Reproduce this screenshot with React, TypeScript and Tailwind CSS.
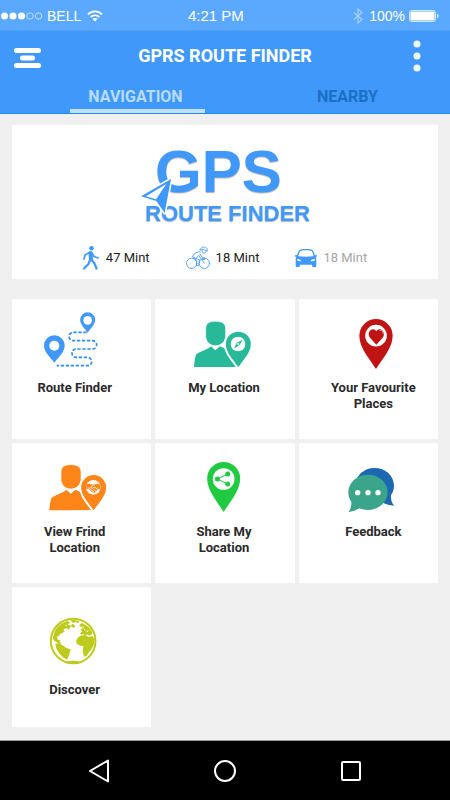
import type { ReactNode } from "react";

const BLUE = "#4099fa";

function pinPath(cx: number, top: number, r: number, tip: number) {
  const cy = top + r;
  const d = tip - cy;
  return `M${cx - r} ${cy}A${r} ${r} 0 0 1 ${cx + r} ${cy}C${cx + r} ${cy + d * 0.35} ${cx + r * 0.45} ${cy + d * 0.65} ${cx} ${tip}C${cx - r * 0.45} ${cy + d * 0.65} ${cx - r} ${cy + d * 0.35} ${cx - r} ${cy}Z`;
}

function TileIcon({ viewBox, children }: { viewBox: string; children: ReactNode }) {
  return (
    <svg className="h-16 w-24" viewBox={viewBox} aria-hidden="true">
      {children}
    </svg>
  );
}

function RouteIcon() {
  return (
    <TileIcon viewBox="83 51 288 192">
      <path
        d="M262 127H222a13 12.500 0 0 0 0 25H279a13 12.500 0 0 1 0 25H230a12 12.500 0 0 0 0 25H265a12 12.500 0 0 1 0 25H172"
        fill="none"
        stroke="#2b8ff5"
        strokeWidth="5"
        strokeDasharray="10 5"
      />
      <path d={pinPath(165, 136, 31, 218)} fill={BLUE} />
      <circle cx="165" cy="167" r="15" fill="#fff" />
      <path d={pinPath(265, 67, 22.5, 128)} fill={BLUE} />
      <circle cx="265" cy="91" r="13" fill="#fff" />
    </TileIcon>
  );
}

function PersonWithPin({ color, children }: { color: string; children: ReactNode }) {
  return (
    <>
      <path
        d="M135 231C136 214 138 202 142 193C148 186 172 182 186 169L199 181L213 169C228 175 238 180 244 190L268 231Z"
        fill={color}
      />
      <path
        d="M199 94C217 94 230 99 230 116V138C230 154 217 167 199 167C182 167 170 154 170 138V116C170 99 182 94 199 94Z"
        fill={color}
        stroke="#fff"
        strokeWidth="2"
      />
      <path d={pinPath(268, 125, 37.5, 231)} fill={color} stroke="#fff" strokeWidth="12" paintOrder="stroke" />
      <path d="M200 231.500H320V245H200Z" fill="#fff" />
      <circle cx="267" cy="162" r="22" fill="#fff" />
      {children}
    </>
  );
}

function MyLocationIcon() {
  return (
    <TileIcon viewBox="81 51 288 192">
      <PersonWithPin color="#27b99a">
        <path d="M281 149L272 165L255 176L263 158Z" fill="#27b99a" />
        <circle cx="267.500" cy="162" r="3" fill="#fff" />
      </PersonWithPin>
    </TileIcon>
  );
}

function FriendIcon() {
  return (
    <TileIcon viewBox="68 53 288 192">
      <PersonWithPin color="#ff8519">
        <path d="M246 153L255 151L267 154L279 151L288 154V167L281 168L271 179L262 176L253 167L246 168Z" fill="#ff8519" />
        <path
          d="M250 164L255 164L264 174M267 156L259 162L264 165L271 161L281 169M268 168L275 174M264 171L270 177"
          fill="none"
          stroke="#fff"
          strokeWidth="2.500"
        />
      </PersonWithPin>
    </TileIcon>
  );
}

function FavouriteIcon() {
  return (
    <TileIcon viewBox="94 51 288 192">
      <path d={pinPath(247, 87, 50, 237)} fill="#c01313" />
      <circle cx="247" cy="137" r="32.500" fill="#fff" />
      <path d="M248 164L229 143C217 128 236 108 248 124C260 108 279 128 267 143Z" fill="#c01313" />
      <path d="M258 121C265 119 270 124 268 131" fill="none" stroke="#fff" strokeWidth="2" />
    </TileIcon>
  );
}

function ShareIcon() {
  return (
    <TileIcon viewBox="81 48 288 192">
      <path d={pinPath(224, 81, 49.5, 231)} fill="#20cb41" />
      <circle cx="224" cy="132" r="32.500" fill="#fff" />
      <path d="M236 117L205 132L236 147" fill="none" stroke="#20cb41" strokeWidth="3" />
      <circle cx="205" cy="132" r="7.500" fill="#20cb41" />
      <circle cx="236" cy="117" r="7.500" fill="#20cb41" />
      <circle cx="236" cy="147" r="7.500" fill="#20cb41" />
    </TileIcon>
  );
}

function FeedbackIcon() {
  return (
    <TileIcon viewBox="94 48 288 192">
      <path d="M243 99C275 99 301 122 301 153C301 165 297 173 292 180C291 192 294 203 301 212C289 211 278 208 269 204C230 213 185 190 185 152C185 122 211 99 243 99Z" fill="#1c69b2" />
      <path d="M223 119C255 119 282 142 282 172C282 202 255 225 223 225C214 225 205 223 197 220C187 226 177 230 164 232C171 222 174 212 173 201C167 193 164 183 164 172C164 142 191 119 223 119Z" fill="#3ba58c" />
      <circle cx="192" cy="173" r="8" fill="#fff" />
      <circle cx="223" cy="173" r="8" fill="#fff" />
      <circle cx="253" cy="173" r="8" fill="#fff" />
    </TileIcon>
  );
}

function DiscoverIcon() {
  return (
    <TileIcon viewBox="83 100 288 192">
      <circle cx="221.500" cy="196" r="67" fill="#fff" stroke="#bdcc1c" strokeWidth="6" />
      <g fill="#bdcc1c">
        <path d="M165 170C172 153 186 141 205 136L213 141L205 146L213 150L221 144L229 153L221 156L216 151L208 162L200 157L192 163L196 168L184 174L178 181L172 184L176 193L184 194L180 198L188 203L178 204L165 195L160 188Z" />
        <path d="M168 204L180 203L192 210L201 217L214 221L210 236L203 252C190 246 176 231 170 216Z" />
        <path d="M212 134L226 133L240 137L236 143L228 139L222 142Z" />
        <path d="M240 150L246 141L253 145C266 151 276 162 280 173L272 180L263 176L260 180L250 175L246 178L242 173L249 167L243 162L251 157L245 155Z" />
        <path d="M234 188L243 180L256 178L266 183L280 182L286 190C286 207 279 219 270 228L262 240L254 243L250 226L252 211L243 210L233 205L230 197Z" />
        <path d="M203 257C214 254 230 255 240 258L230 262H212Z" />
      </g>
      <path d="M247 153L253 156M262 168L267 165M198 148L203 151M254 161L258 163" stroke="#fff" strokeWidth="3" />
      <path d="M276 224C270 237 261 246 250 251" fill="none" stroke="#fff" strokeWidth="3" />
    </TileIcon>
  );
}

function WalkIcon() {
  return (
    <svg className="h-6 w-[18px]" viewBox="0 0 18 24" fill="none" stroke={BLUE} strokeLinecap="round" strokeLinejoin="round" aria-hidden="true">
      <circle cx="9.500" cy="2.300" r="2.300" fill={BLUE} stroke="none" />
      <path d="M8.500 7L9 13.500" strokeWidth="4" />
      <path d="M7.500 6.500L3 9L2 13M10 7L12 10.500L16 12" strokeWidth="1.700" />
      <path d="M8 14L6.500 18L2 22.500M9.800 14L12.500 17.500L14.500 22.500" strokeWidth="2.200" />
    </svg>
  );
}

function BikeIcon() {
  return (
    <svg className="h-6 w-6" viewBox="198 347 72 72" fill="none" stroke={BLUE} strokeWidth="2.500" strokeLinejoin="round" strokeLinecap="round" aria-hidden="true">
      <circle cx="215" cy="399" r="15.500" />
      <circle cx="253" cy="399" r="15.500" />
      <path d="M240 358C242 349 257 348 261 355L262 362L251 358Z" />
      <path d="M246 360C246 370 257 372 259 362" />
      <path d="M241 365C231 362 222 370 217 378L227 385L236 375L245 388L255 387L254 382L247 382L240 371" />
      <path d="M218 381L230 391L229 406H236L239 389L227 384M253 399L246 389" />
    </svg>
  );
}

function CarIcon() {
  return (
    <svg className="h-6 w-[22px]" viewBox="215 45 66 72" aria-hidden="true">
      <path
        fill={BLUE}
        fillRule="evenodd"
        d="M248 54C259 54 265 55 268 58C271 62 273 68 275 73L280 72C282 75 280 78 277 79C279 82 279 85 279 89V105C279 108 276 108 273 108C268 108 266 107 266 101H230C230 107 228 108 223 108C220 108 217 108 217 105V89C217 85 217 82 219 79C216 78 214 75 216 72L221 73C223 68 225 62 228 58C231 55 237 54 248 54ZM248 58C239 58 233 59 231 61C228 65 226 70 225 76C240 78 256 78 271 76C270 70 268 65 265 61C263 59 257 58 248 58ZM221 84L223 90L234 91C233 86 227 84 221 84ZM275 84C269 84 263 86 262 91L273 90Z"
      />
    </svg>
  );
}

const modes = [
  { icon: <WalkIcon />, time: "47 Mint", tone: "text-[#222222]" },
  { icon: <BikeIcon />, time: "18 Mint", tone: "text-[#222222]" },
  { icon: <CarIcon />, time: "18 Mint", tone: "text-[#a6a6a6]" },
];

const tiles = [
  { icon: <RouteIcon />, lines: ["Route Finder"], pad: "pt-2 pr-3.5" },
  { icon: <MyLocationIcon />, lines: ["My Location"], pad: "pt-2 pr-0.5" },
  { icon: <FavouriteIcon />, lines: ["Your Favourite", "Places"], pad: "pt-2 pl-2.5" },
  { icon: <FriendIcon />, lines: ["View Frind", "Location"], pad: "pt-2 pr-3.5" },
  { icon: <ShareIcon />, lines: ["Share My", "Location"], pad: "pt-2 pr-0.5" },
  { icon: <FeedbackIcon />, lines: ["Feedback"], pad: "pt-2 pl-2.5" },
  { icon: <DiscoverIcon />, lines: ["Discover"], pad: "pt-[22px] pr-3.5" },
];

function StatusBar() {
  return (
    <div className="grid h-[30px] grid-cols-[188px_1fr_auto] items-center bg-[#5ba9ff] pt-0.5 pr-[11px] font-['Liberation_Sans',Arial,sans-serif] text-sm text-white">
      <div className="flex items-center">
        <svg className="h-2 w-[43px]" viewBox="0 0 43 8" aria-hidden="true">
          <g fill="#fff">
            <circle cx="4.500" cy="4" r="3.500" />
            <circle cx="13" cy="4" r="3.500" />
            <circle cx="21.500" cy="4" r="3.500" />
          </g>
          <g fill="none" stroke="#fff" strokeWidth="0.600">
            <circle cx="30" cy="4" r="3.200" />
            <circle cx="38.500" cy="4" r="3.200" />
          </g>
        </svg>
        <span className="ml-1">BELL</span>
        <svg className="ml-1.5 h-3 w-4" viewBox="0 0 16 12" fill="none" stroke="#fff" strokeWidth="1.800" aria-hidden="true">
          <path d="M1 4.300C5 .3 11 .3 15 4.300M3.700 7C6.200 4.700 9.800 4.700 12.300 7" />
          <path d="M5.500 9C7 7.800 9 7.800 10.500 9L8 11.500Z" fill="#fff" stroke="none" />
        </svg>
      </div>
      <span className="text-[15px]">4:21 PM</span>
      <div className="flex items-center">
        <svg className="h-4 w-2.5" viewBox="0 0 10 16" fill="none" stroke="#a5d0ff" strokeWidth="1.200" aria-hidden="true">
          <path d="M1 4.500L9 11.500L5 15V1L9 4.500L1 11.500" />
        </svg>
        <span className="ml-1.5">100%</span>
        <svg className="ml-1 h-3 w-[30px]" viewBox="0 0 30 12" aria-hidden="true">
          <rect x=".5" y=".5" width="26" height="11" rx="2" fill="none" stroke="#d4e8ff" />
          <rect x="1.500" y="1.500" width="24" height="9" rx="1" fill="#fff" />
          <path d="M28 4C30 4.500 30 7.500 28 8Z" fill="#fff" />
        </svg>
      </div>
    </div>
  );
}

function Header() {
  return (
    <header className="border-b border-[#1a8cff] bg-[#4099fa]">
      <div className="grid h-[51px] grid-cols-[1fr_auto_1fr] items-center border-t border-[#4f9ff5]">
        <button type="button" aria-label="Menu" className="ml-3.5 justify-self-start pt-1">
          <svg className="h-5 w-[27px]" viewBox="0 0 27 20" fill="#fff">
            <rect y="0" width="27" height="5" rx="2.500" />
            <rect x="6" y="7.500" width="15" height="5" rx="2.500" />
            <rect y="15" width="27" height="5" rx="2.500" />
          </svg>
        </button>
        <h1 className="text-lg leading-6 font-bold text-white">GPRS ROUTE FINDER</h1>
        <button type="button" aria-label="More options" className="mr-[29px] justify-self-end">
          <svg className="h-8 w-2" viewBox="0 0 8 32" fill="#f2f8ff">
            <circle cx="4" cy="4" r="3.500" />
            <circle cx="4" cy="16" r="3.500" />
            <circle cx="4" cy="28" r="3.500" />
          </svg>
        </button>
      </div>
      <nav className="flex h-8 justify-between pr-[33px] pl-[70px] text-base leading-8 font-bold">
        <button type="button" className="w-[135px] border-b-4 border-[#c3e0ff] pr-1 text-[#b9dbff]" aria-current="page">
          NAVIGATION
        </button>
        <button type="button" className="w-[135px] border-b-4 border-transparent pr-1 text-[#1b6fc6]">
          NEARBY
        </button>
      </nav>
    </header>
  );
}

function SummaryCard() {
  return (
    <section className="bg-white pt-[18px] pb-[9px]">
      <div className="relative mx-auto w-[172px] font-['Liberation_Sans',Arial,sans-serif] font-bold whitespace-nowrap text-[#4099fa] [text-shadow:0_1px_1px_rgba(0,0,0,0.3)]">
        <p className="pl-4 text-[60px] leading-[58px]">GPS</p>
        <p className="pl-1.5 text-[22px] leading-[26px]">ROUTE FINDER</p>
        <svg className="absolute top-[34px] left-px h-[39px] w-[33px]" viewBox="60 141 99 117" aria-hidden="true">
          <path d="M63 199L153 147L134 249L109 213Z" fill="#fff" stroke="#fff" strokeWidth="9" strokeLinejoin="round" />
          <path d="M63 199L153 147L134 249L109 213Z" fill={BLUE} />
          <path d="M78 199L139 162L108 208Z" fill="#fff" />
        </svg>
      </div>
      <ul className="mt-[19px] flex justify-center gap-9 pr-px text-[13px]">
        {modes.map((mode, i) => (
          <li key={i} className={`flex items-center gap-1.5 ${mode.tone}`}>
            {mode.icon}
            <span>{mode.time}</span>
          </li>
        ))}
      </ul>
    </section>
  );
}

export default function App() {
  return (
    <div className="flex min-h-screen flex-col bg-[#f0f0f0] font-[Roboto,sans-serif]">
      <StatusBar />
      <Header />
      <main className="grow px-3 pt-[11px] pb-3">
        <SummaryCard />
        <div className="mt-5 grid auto-rows-[140px] grid-cols-3 gap-1">
          {tiles.map((tile) => (
            <button
              key={tile.lines.join(" ")}
              type="button"
              className={`flex flex-col items-center gap-[9px] bg-white text-[13px] leading-4 font-bold text-[#2a2a2a] ${tile.pad}`}
            >
              {tile.icon}
              <span>
                {tile.lines.map((line) => (
                  <span key={line} className="block">
                    {line}
                  </span>
                ))}
              </span>
            </button>
          ))}
        </div>
      </main>
      <footer className="flex h-[60px] items-center justify-between border-t border-[#9a9a9a] bg-black px-[88px]">
        <button type="button" aria-label="Back">
          <svg className="h-6 w-[22px]" viewBox="0 0 22 24" fill="none" stroke="#fff" strokeWidth="2" strokeLinejoin="round">
            <path d="M2 12L20 1.500V22.500Z" />
          </svg>
        </button>
        <button type="button" aria-label="Home">
          <svg className="h-6 w-[22px]" viewBox="0 0 22 24" fill="none" stroke="#fff" strokeWidth="2">
            <circle cx="11" cy="12" r="10" />
          </svg>
        </button>
        <button type="button" aria-label="Recent apps">
          <svg className="h-6 w-[22px]" viewBox="0 0 22 24" fill="none" stroke="#fff" strokeWidth="2">
            <rect x="2" y="3" width="18" height="18" rx="1" />
          </svg>
        </button>
      </footer>
    </div>
  );
}
